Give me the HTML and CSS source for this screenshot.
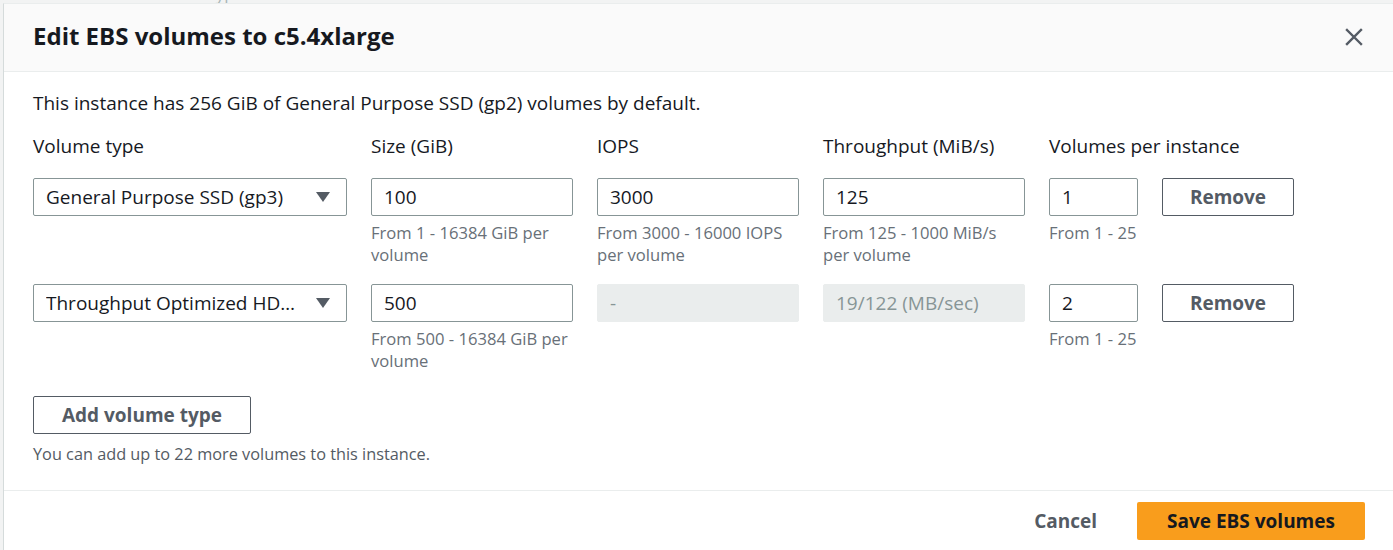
FILE: index.html
```html
<!DOCTYPE html>
<html lang="en">
<head>
<meta charset="utf-8">
<title>Edit EBS volumes</title>
<link rel="stylesheet" href="styles.css">
</head>
<body>
<div class="page">
  <div class="behind"><span class="behind-text">Choose EC2 instance type</span></div>
  <div class="modal">
    <div class="modal-header">
      <h2 class="modal-title">Edit EBS volumes to c5.4xlarge</h2>
      <button class="close-btn" aria-label="Close">
        <svg width="18" height="18" viewBox="0 0 18 18"><path d="M2 2 L16 16 M16 2 L2 16" stroke="#545b64" stroke-width="2.4" stroke-linecap="square" fill="none"/></svg>
      </button>
    </div>
    <div class="modal-body">
      <p class="intro">This instance has 256 GiB of General Purpose SSD (gp2) volumes by default.</p>
      <div class="vol-grid">
        <div class="label">Volume type</div>
        <div class="label">Size (GiB)</div>
        <div class="label">IOPS</div>
        <div class="label">Throughput (MiB/s)</div>
        <div class="label nowrap">Volumes per instance</div>
        <div></div>

        <div class="cell"><div class="select"><span class="select-text">General Purpose SSD (gp3)</span><span class="caret"></span></div></div>
        <div class="cell"><div class="input">100</div><div class="hint">From 1 - 16384 GiB per volume</div></div>
        <div class="cell"><div class="input">3000</div><div class="hint">From 3000 - 16000 IOPS per volume</div></div>
        <div class="cell"><div class="input">125</div><div class="hint">From 125 - 1000 MiB/s per volume</div></div>
        <div class="cell"><div class="input">1</div><div class="hint nowrap">From 1 - 25</div></div>
        <div class="cell"><button class="btn">Remove</button></div>

        <div class="cell"><div class="select"><span class="select-text">Throughput Optimized HDD (st1)</span><span class="caret"></span></div></div>
        <div class="cell"><div class="input">500</div><div class="hint">From 500 - 16384 GiB per volume</div></div>
        <div class="cell"><div class="input disabled">-</div></div>
        <div class="cell"><div class="input disabled">19/122 (MB/sec)</div></div>
        <div class="cell"><div class="input">2</div><div class="hint nowrap">From 1 - 25</div></div>
        <div class="cell"><button class="btn">Remove</button></div>
      </div>
      <button class="btn add-btn">Add volume type</button>
      <p class="small">You can add up to 22 more volumes to this instance.</p>
    </div>
    <div class="modal-footer">
      <button class="link-btn">Cancel</button>
      <button class="primary-btn">Save EBS volumes</button>
    </div>
  </div>
</div>
</body>
</html>
```

FILE: styles.css
```css
* { box-sizing: border-box; }
html, body { margin: 0; padding: 0; }
body {
  background: #f2f3f3;
  font-family: "Open Sans", "Noto Sans", Arial, sans-serif;
  color: #16191f;
  overflow: hidden;
}
.page {
  padding-left: 3px;
  height: 550px;
}
.behind {
  height: 3px;
  overflow: hidden;
  padding-left: 38px;
}
.behind-text {
  display: block;
  margin-top: -15px;
  font-size: 17px;
  line-height: 18px;
  color: #aab7b8;
}
.modal {
  background: #fff;
  border-left: 1px solid #d5dbdb;
  border-top: 1px solid #eaeded;
  height: 600px;
}
.modal-header {
  background: #fafafa;
  border-bottom: 1px solid #eaeded;
  height: 68px;
  display: flex;
  align-items: center;
  justify-content: space-between;
  padding: 0 29px 0 29px;
}
.modal-title {
  margin: 0 0 3px 0;
  font-size: 24px;
  font-weight: 700;
  line-height: 30px;
  color: #16191f;
}
.close-btn {
  background: none;
  border: 0;
  padding: 0;
  width: 18px;
  height: 18px;
  display: flex;
  margin-right: 1px;
  margin-bottom: 2px;
}
.modal-body {
  padding: 20px 29px 0 29px;
}
.intro {
  margin: 0 0 21px 0;
  font-size: 19px;
  line-height: 22px;
}
.vol-grid {
  display: grid;
  grid-template-columns: 314px 202px 202px 202px 89px 132px;
  column-gap: 24px;
}
.label {
  font-size: 19px;
  line-height: 22px;
  margin-bottom: 21px;
}
.nowrap { white-space: nowrap; }
.cell {
  min-height: 106px;
}
.select, .input {
  height: 38px;
  border: 1px solid #879596;
  border-radius: 2px;
  background: #fff;
  font-size: 19px;
  line-height: 36px;
  padding: 0 12px;
  color: #16191f;
  white-space: nowrap;
}
.select {
  display: flex;
  align-items: center;
  justify-content: space-between;
  padding-right: 16px;
}
.select-text {
  overflow: hidden;
  text-overflow: ellipsis;
  white-space: nowrap;
  margin-right: 18px;
}
.caret {
  flex: none;
  width: 0;
  height: 0;
  border-left: 7px solid transparent;
  border-right: 7px solid transparent;
  border-top: 10px solid #545b64;
}
.input.disabled {
  background: #eaeded;
  border-color: #eaeded;
  color: #879596;
}
.hint {
  margin-top: 6px;
  font-size: 16.6px;
  line-height: 22px;
  color: #687078;
}
.btn {
  height: 38px;
  border: 1px solid #545b64;
  border-radius: 2px;
  background: #fff;
  color: #545b64;
  font-family: inherit;
  font-size: 19px;
  font-weight: 700;
  padding: 0 20px;
  width: 100%;
}
.add-btn {
  width: 218px;
  margin-top: 6px;
  display: block;
}
.small {
  margin: 10px 0 0 0;
  font-size: 16.3px;
  line-height: 20px;
  color: #545b64;
}
.modal-footer {
  margin-top: 26px;
  border-top: 1px solid #eaeded;
  padding: 11px 28px 0 0;
  display: flex;
  justify-content: flex-end;
  align-items: center;
  gap: 20px;
}
.link-btn {
  background: none;
  border: 0;
  font-family: inherit;
  font-size: 19px;
  font-weight: 700;
  color: #545b64;
  height: 38px;
  padding: 0 20px;
}
.primary-btn {
  height: 38px;
  width: 228px;
  border: 0;
  border-radius: 2px;
  background: #f99d1c;
  color: #16191f;
  font-family: inherit;
  font-size: 19px;
  font-weight: 700;
  padding: 0 10px;
}
```
